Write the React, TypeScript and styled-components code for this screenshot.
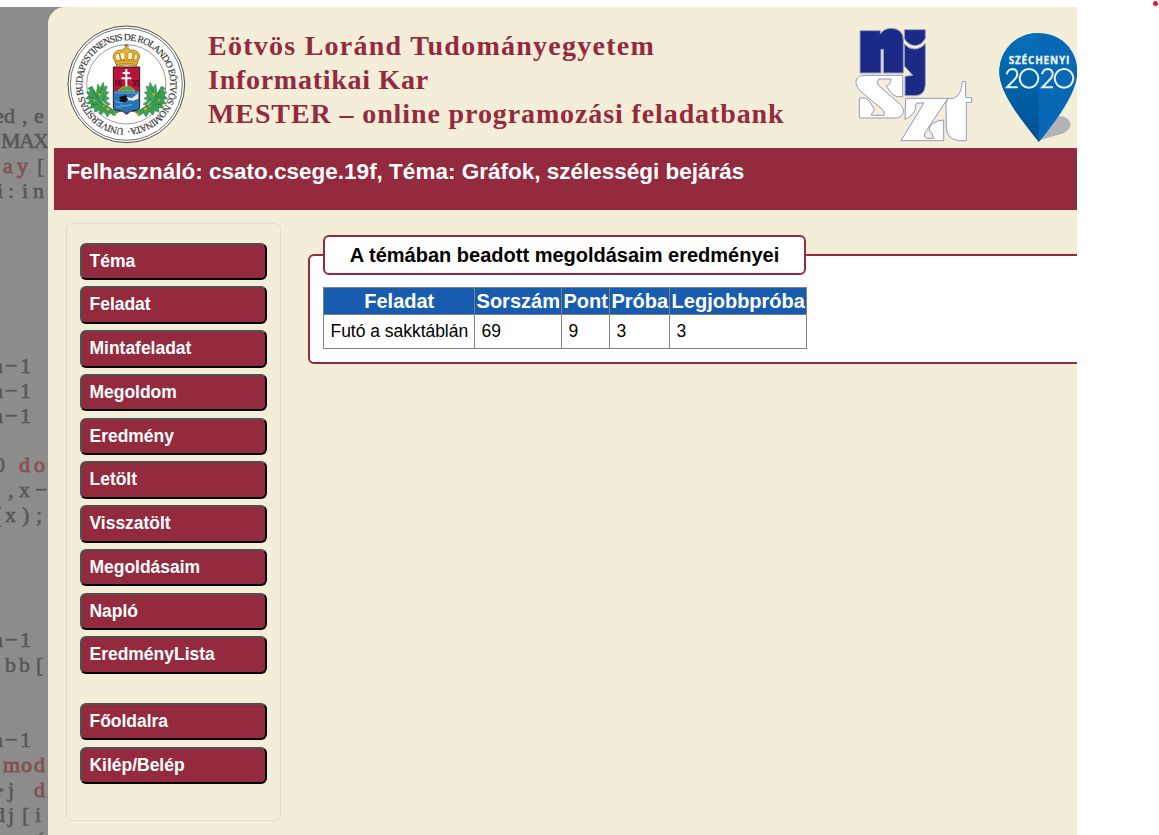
import React from 'react';
import styled, { createGlobalStyle } from 'styled-components';

const WINE = '#942a3e';
const CREAM = '#f4edd7';

const GlobalStyle = createGlobalStyle`
  * { box-sizing: border-box; }
  body { margin: 0; background: #fff; overflow: hidden; font-family: "Liberation Sans", Arial, sans-serif; }
`;

const Page = styled.div`
  position: relative;
  height: 835px;
  padding-top: 7px;
  overflow: hidden;
`;

const RedDot = styled.span`
  position: absolute;
  top: 1px;
  left: 1153px;
  width: 5px;
  height: 5px;
  border-radius: 50%;
  background: #ed1c24;
`;

const Frame = styled.div`
  display: flex;
  width: 1077px;
  height: 828px;
  background: #8c8c8c;
  overflow: hidden;
`;

const Strip = styled.svg`
  flex: none;
  width: 48px;
  height: 828px;
  font-family: "Liberation Serif", serif;
  font-size: 22px;
`;

const Main = styled.main`
  flex: 1;
  min-width: 0;
  background: ${CREAM};
  border-top-left-radius: 17px;
  overflow: hidden;
`;

const Banner = styled.header`
  display: flex;
  height: 141px;
  padding: 8px 0 0 12px;
`;

const Logo = styled.svg<{ $w: number; $ml?: number }>`
  flex: none;
  width: ${(p) => p.$w}px;
  height: 133px;
  margin-left: ${(p) => p.$ml ?? 0}px;
`;

const Titles = styled.div`
  width: 637px;
  margin-left: 13px;
  padding-top: 14px;
`;

const TitleLine = styled.div<{ $spacing: number }>`
  height: 34px;
  line-height: 34px;
  font-family: "Liberation Serif", serif;
  font-size: 28px;
  font-weight: bold;
  white-space: nowrap;
  color: ${WINE};
  letter-spacing: ${(p) => p.$spacing}px;
`;

const UserBar = styled.div`
  height: 62px;
  margin-left: 6px;
  padding: 11px 0 0 12.5px;
  background: ${WINE};
  color: #fff;
  font-size: 22.5px;
  line-height: 26px;
  font-weight: bold;
  white-space: nowrap;
`;

const Columns = styled.div`
  display: flex;
  align-items: flex-start;
  padding: 13px 0 0 18px;
`;

const Menu = styled.nav`
  flex: none;
  display: flex;
  flex-direction: column;
  gap: 6.25px;
  width: 215px;
  height: 598px;
  padding: 18.7px 13px 0;
  border: 1px solid #dddddf;
  border-radius: 6px;
`;

const MenuButton = styled.button<{ $first?: boolean }>`
  flex: none;
  height: 37.5px;
  margin: ${(p) => (p.$first ? '22.8px' : '0')} 0 0;
  padding: 0 7.5px 0.4px;
  border: 2px solid;
  border-color: #505050 #000 #000 #505050;
  border-radius: 6px;
  background: ${WINE};
  color: #fff;
  font: bold 17.5px "Liberation Sans", Arial, sans-serif;
  letter-spacing: -0.02px;
  text-align: left;
`;

const Results = styled.fieldset`
  flex: none;
  width: 800px;
  height: 129px;
  margin: 12px 0 0 27px;
  padding: 12px 13px 0;
  border: 2px solid ${WINE};
  border-radius: 6px;
  background: #fff;
`;

const Legend = styled.legend`
  width: 483px;
  height: 40px;
  margin: 0 auto 0 0;
  padding: 0;
  border: 2px solid ${WINE};
  border-radius: 6px;
  background: #fff;
  font-size: 20px;
  line-height: 36px;
  font-weight: bold;
  white-space: nowrap;
`;

const LegendText = styled.span`
  display: block;
  text-align: center;
`;

const Table = styled.table`
  width: 484px;
  table-layout: fixed;
  border-collapse: collapse;
  white-space: nowrap;
`;

const HeadCell = styled.th<{ $w: number }>`
  width: ${(p) => p.$w}px;
  height: 27px;
  padding: 0 0 0 0.5px;
  border: 1px solid #808080;
  background: #185cb0;
  color: #fff;
  font-size: 20px;
  line-height: 26px;
`;

const Cell = styled.td`
  height: 34px;
  padding: 0 0 0 6.5px;
  border: 1px solid #808080;
  font-size: 17.5px;
  line-height: 33px;
  letter-spacing: -0.03px;
`;

type Code = { y: number; s: string; x: number[]; key?: boolean };
const code: Code[] = [
  { y: 116, s: 'ed,e', x: [-6, 4, 22, 34] },
  { y: 141, s: 'MAX', x: [1, 19, 33] },
  { y: 166, s: 'ay', x: [3, 17], key: true },
  { y: 166, s: '[', x: [37] },
  { y: 191, s: 'i:in', x: [-3, 8, 22, 33] },
  ...[366, 391, 416, 640, 740].map((y) => ({ y, s: 'n−1', x: [-8, 5, 20] })),
  { y: 465, s: '0', x: [-6] },
  { y: 465, s: 'do', x: [19, 34], key: true },
  { y: 490, s: ',x−', x: [8, 19, 35] },
  { y: 515, s: '(x);', x: [-6, 5, 22, 36] },
  { y: 665, s: 'bb[', x: [5, 19, 36] },
  { y: 765, s: 'mod', x: [3, 21, 34], key: true },
  { y: 790, s: '>j', x: [-8, 8] },
  { y: 790, s: 'd', x: [34], key: true },
  { y: 815, s: 'dj[i', x: [-6, 8, 22, 35] },
  { y: 840, s: '(', x: [36] },
];

function CodeStrip() {
  return (
    <Strip viewBox="0 0 48 828">
      {code.map((c, i) => (
        <text
          key={i}
          x={c.x.join(' ')}
          y={c.y}
          fill={c.key ? '#855252' : '#585858'}
          stroke={c.key ? '#855252' : '#585858'}
          strokeWidth={c.key ? 0.9 : 0.6}
        >
          {c.s}
        </text>
      ))}
    </Strip>
  );
}

function Branch() {
  return (
    <g>
      <path
        d="M184 287 Q140 292 108 235 L96 214 L84 220 L92 229 L79 232 L88 240 L77 251 L91 254 L80 266 L96 267 L88 280 L104 278 L103 292 L117 286 L121 300 L132 290 L142 306 L150 294 L164 303 L170 294Z"
        fill="#37a052"
        stroke="#2b7a40"
        strokeWidth="1.5"
      />
      <path
        d="M108 240 L113 207 L120 218 L130 202 L133 216 L142 213 L137 229 L147 232 L136 243 L148 250 L137 257 L151 268 L139 271 L156 284Z"
        fill="#3da657"
        stroke="#2b7a40"
        strokeWidth="1.5"
      />
      <path d="M98 226 Q122 281 184 289 M112 244 L128 218 M122 262 L140 238 M104 250 L86 245 M113 268 L92 268" stroke="#236b38" strokeWidth="1.8" fill="none" />
      <g fill="#e8a11c">
        <circle cx="119" cy="238" r="4" />
        <circle cx="144" cy="282" r="5" />
        <circle cx="103" cy="256" r="3" />
        <circle cx="167" cy="297" r="4" />
        <circle cx="131" cy="273" r="3" />
      </g>
    </g>
  );
}

function Seal() {
  return (
    <Logo $w={135} viewBox="0 0 405 399">
      <defs>
        <path id="ring" d="M199 340 A132 132 0 0 1 199 76 A132 132 0 0 1 199 340" />
      </defs>
      <circle cx="199" cy="208" r="175" fill="#fff" stroke="#4c4c4c" strokeWidth="3" />
      <circle cx="199" cy="208" r="168" fill="none" stroke="#555" strokeWidth="2.5" />
      <circle cx="199" cy="208" r="119" fill="none" stroke="#666" strokeWidth="2" />
      <text fontFamily="Liberation Serif, serif" fontSize="29" fill="#333" stroke="#333" strokeWidth=".5">
        <textPath href="#ring" startOffset="7" textLength="820" lengthAdjust="spacing">
          UNIVERSITAS BUDAPESTINENSIS DE ROLANDO EÖTVÖS NOMINATA·
        </textPath>
      </text>
      <Branch />
      <g transform="translate(400 0) scale(-1 1)">
        <Branch />
      </g>
      <path d="M160 156 H239 V276 Q239 285 228 286 Q209 286 200 298 Q190 286 171 286 Q160 285 160 276Z" fill="#b9133c" stroke="#222" strokeWidth="3" />
      <path d="M162 227 H237 V276 Q237 284 226 284 Q208 284 200 295 Q191 284 172 284 Q162 283 162 276Z" fill="#2475ba" />
      <path d="M162 234 H237" stroke="#8dbbe0" strokeWidth="2" />
      <path d="M173 228 Q184 214 200 213 Q216 214 225 228Z" fill="#4ba047" stroke="#e3b521" strokeWidth="2" />
      <path d="M199 162 V214 M188 174 H210 M184 190 H214" stroke="#fff" strokeWidth="6" />
      <g fontFamily="Liberation Serif, serif" fontSize="22" fill="#2a1015" stroke="#2a1015" strokeWidth=".6">
        <text x="162" y="214">16</text>
        <text x="216" y="214">35</text>
      </g>
      <path d="M178 246 L198 240 L204 253 L197 262 L181 261Z" fill="#111" />
      <path d="M199 246 L216 249 L235 235 V251 L220 257 L206 256Z" fill="#eee3dc" />
      <path d="M165 258 Q178 265 189 263 M181 270 Q197 278 216 268 M168 276 H187" fill="none" stroke="#a5cbe9" strokeWidth="2" />
      <path
        d="M170 154 L164 136 Q155 128 162 116 Q171 103 187 105 Q192 98 199 98 Q206 98 211 105 Q228 103 237 116 Q243 127 234 137 L229 154 Q199 145 170 154Z"
        fill="#e9b629"
        stroke="#795414"
        strokeWidth="2"
      />
      <path
        d="M169 136 Q161 126 169 117 L177 115 L182 135Z M183 134 L179 114 Q186 110 194 114 L195 133Z M203 133 L204 113 Q213 109 219 114 L216 134Z M220 135 L225 116 Q236 118 231 134Z"
        fill="#fff4d2"
        stroke="#a36b18"
        strokeWidth="2"
      />
      <path d="M166 142 Q199 132 232 142 M169 149 Q199 140 230 149" fill="none" stroke="#a2671b" strokeWidth="3" strokeDasharray="5 3" />
      <path d="M197 98 L201 87 M193 91 L206 94" stroke="#765318" strokeWidth="3" />
    </Logo>
  );
}

function NjsztLogo() {
  return (
    <Logo $w={135} viewBox="0 0 405 399">
      <g fill="#1a2a86" stroke="#9da2c4" strokeWidth="3">
        <path d="M45 47 H106 V57 Q116 40 140 40 Q175 42 175 76 V174 H115 V103 H108 V174 H45Z" />
        <path d="M178 44 H241 V70 Q230 92 209 92 Q188 90 178 70Z" />
        <path d="M178 87 Q191 102 209 102 Q229 101 241 85 V211 Q239 242 209 242 H180 V184 L203 181 L178 153Z" />
      </g>
      <g fill="#fff" stroke="#9297bf" strokeWidth="3" strokeLinejoin="round">
        <path d="M173 181 V245 H158 C140 242 132 223 124 213 Q138 207 138 192 H101 Q94 201 100 211 L165 268 C183 285 175 304 157 309 H43 V249 H61 C73 255 80 268 86 280 C90 291 78 293 79 301 H117 Q121 291 112 283 L47 229 C27 209 27 183 58 181Z" />
        <path d="M182 250 H309 L240 353 Q235 369 246 370 H266 Q260 350 252 345 Q256 318 296 315 V377 H168 L237 264 H215 Q208 269 211 282 Q209 298 180 313Z" />
        <path d="M303 264 L309 250 H326 Q349 242 352 199 H362 V248 H380 V262 H364 V377 H340 Q305 371 304 339Z" />
      </g>
    </Logo>
  );
}

function SzechenyiLogo() {
  return (
    <Logo $w={92} $ml={5} viewBox="0 15 276 399">
      <defs>
        <linearGradient id="pinLeft" x1="0" y1="0" x2="0" y2="1">
          <stop offset="0" stopColor="#0870b8" />
          <stop offset=".5" stopColor="#0061a8" />
          <stop offset="1" stopColor="#00508e" />
        </linearGradient>
      </defs>
      <g transform="translate(0 30)">
        <path d="M163 361 L218 289 Q248 285 256 309 Q260 330 231 341Z" fill="#b4b4b8" />
        <path d="M160 39 C95 39 43 89 43 156 C43 215 102 292 162 366 C221 292 277 215 277 156 C277 89 227 39 160 39Z" fill="#0769b5" />
        <path d="M160 39 C95 39 43 89 43 156 C43 215 102 292 162 366Z" fill="url(#pinLeft)" />
        <text x="71" y="132" textLength="182" fontFamily="Open Sans, sans-serif" fontWeight="bold" fontSize="30" fill="#e8f3fb" stroke="#e8f3fb" strokeWidth="1">SZÉCHENYI</text>
        <g fill="none" stroke="#e8f3fb" strokeWidth="6">
          <path d="M65 163 Q69 147 82 147 Q97 148 97 163 Q97 169 90 177 L66 202 H98" />
          <ellipse cx="132" cy="175" rx="28" ry="28" />
          <path d="M171 163 Q175 147 188 147 Q203 148 203 163 Q203 169 196 177 L172 202 H204" />
          <ellipse cx="237" cy="175" rx="28" ry="28" />
        </g>
      </g>
    </Logo>
  );
}

const items = ['Téma', 'Feladat', 'Mintafeladat', 'Megoldom', 'Eredmény', 'Letölt', 'Visszatölt', 'Megoldásaim', 'Napló', 'EredményLista'];
const heads: [string, number][] = [
  ['Feladat', 151],
  ['Sorszám', 87],
  ['Pont', 48],
  ['Próba', 60],
  ['Legjobbpróba', 137],
];

export default function App() {
  return (
    <Page>
      <GlobalStyle />
      <Frame>
        <CodeStrip />
        <Main>
          <Banner>
            <Seal />
            <Titles>
              <TitleLine $spacing={1.25}>Eötvös Loránd Tudományegyetem</TitleLine>
              <TitleLine $spacing={0.73}>Informatikai Kar</TitleLine>
              <TitleLine $spacing={0.89}>MESTER – online programozási feladatbank</TitleLine>
            </Titles>
            <NjsztLogo />
            <SzechenyiLogo />
          </Banner>
          <UserBar>Felhasználó: csato.csege.19f, Téma: Gráfok, szélességi bejárás</UserBar>
          <Columns>
            <Menu>
              {items.map((t) => (
                <MenuButton key={t}>{t}</MenuButton>
              ))}
              <MenuButton $first>Főoldalra</MenuButton>
              <MenuButton>Kilép/Belép</MenuButton>
            </Menu>
            <Results>
              <Legend>
                <LegendText>A témában beadott megoldásaim eredményei</LegendText>
              </Legend>
              <Table>
                <thead>
                  <tr>
                    {heads.map(([t, w]) => (
                      <HeadCell key={t} $w={w}>{t}</HeadCell>
                    ))}
                  </tr>
                </thead>
                <tbody>
                  <tr>
                    {['Futó a sakktáblán', '69', '9', '3', '3'].map((t, i) => (
                      <Cell key={i}>{t}</Cell>
                    ))}
                  </tr>
                </tbody>
              </Table>
            </Results>
          </Columns>
        </Main>
      </Frame>
      <RedDot />
    </Page>
  );
}
